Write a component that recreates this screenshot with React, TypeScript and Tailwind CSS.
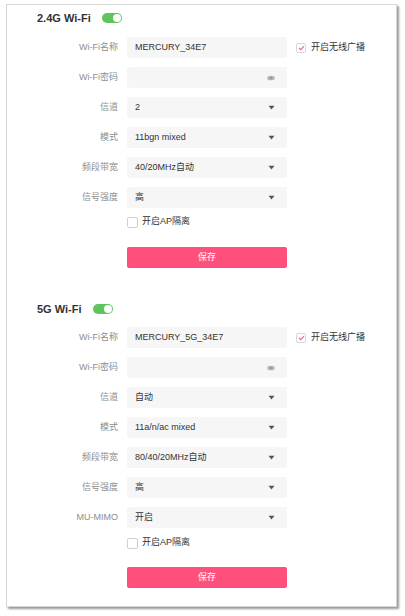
import React from "react";

const FONT = { fontFamily: '"Liberation Sans","Noto Sans CJK SC",sans-serif' };

function Toggle() {
  return (
    <div className="ml-[11px] flex h-[10px] w-[20px] items-center justify-end rounded-full bg-[#5ec45e] pr-[1px]">
      <div className="h-[8px] w-[8px] rounded-full bg-white" />
    </div>
  );
}

function Chevron() {
  return (
    <svg width="7" height="5" viewBox="0 0 7 5" className="shrink-0">
      <path d="M0.5 0.8 L6.5 0.8 L3.5 4.4 Z" fill="#555" />
    </svg>
  );
}

function Eye() {
  return (
    <svg width="8" height="6" viewBox="0 0 8 6" className="shrink-0">
      <ellipse cx="4" cy="3" rx="3.8" ry="2.3" fill="#b5b5b5" />
      <circle cx="4" cy="3" r="1.2" fill="#9a9a9a" />
    </svg>
  );
}

type RowProps = {
  label: string;
  value?: string;
  icon?: "eye" | "chevron";
  extra?: React.ReactNode;
};

function Row({ label, value, icon, extra }: RowProps) {
  return (
    <div className="flex h-[21px] items-center">
      <div className="w-[111px] shrink-0 text-right text-[9px] text-[#8e8e8e]">{label}</div>
      <div className="ml-[9px] flex h-[21px] w-[160px] shrink-0 items-center justify-between rounded-[2px] bg-[#f6f6f6] pl-[8px] pr-[12px] text-[9px] text-[#333]">
        <span>{value}</span>
        {icon === "eye" ? <Eye /> : icon === "chevron" ? <Chevron /> : null}
      </div>
      {extra}
    </div>
  );
}

function Broadcast() {
  return (
    <div className="ml-[9px] flex items-center">
      <div className="flex h-[10px] w-[10px] items-center justify-center rounded-[2px] border border-[#d8d8d8] bg-white">
        <svg width="7" height="6" viewBox="0 0 7 6">
          <path d="M1 3 L2.8 4.7 L6 1.2" stroke="#ff5a80" strokeWidth="1.1" fill="none" />
        </svg>
      </div>
      <span className="ml-[5px] text-[9px] text-[#333]">开启无线广播</span>
    </div>
  );
}

function ApIsolation() {
  return (
    <div className="flex h-[14px] items-center pl-[120px]">
      <div className="h-[11px] w-[11px] rounded-[2px] border border-[#d0d0d0] bg-white" />
      <span className="ml-[4px] text-[9px] text-[#333]">开启AP隔离</span>
    </div>
  );
}

function SaveButton() {
  return (
    <div className="pl-[120px]">
      <button className="flex h-[21px] w-[160px] items-center justify-center rounded-[2px] bg-[#ff4f7b] text-[9px] text-white">
        保存
      </button>
    </div>
  );
}

export default function App() {
  return (
    <div className="h-[616px] w-[405px] bg-white pl-[6px] pt-[4px]" style={FONT}>
      <div className="flex h-[603px] w-[391px] flex-col border border-[#d6d6d6] bg-white shadow-[2px_2px_2px_rgba(0,0,0,0.4)]">
        {/* 2.4G */}
        <div className="mt-[6px] flex h-[14px] items-center pl-[30px]">
          <span className="text-[11px] font-bold text-[#333]">2.4G Wi-Fi</span>
          <Toggle />
        </div>
        <div className="mt-[12px] flex flex-col gap-[9px]">
          <Row label="Wi-Fi名称" value="MERCURY_34E7" extra={<Broadcast />} />
          <Row label="Wi-Fi密码" icon="eye" />
          <Row label="信道" value="2" icon="chevron" />
          <Row label="模式" value="11bgn mixed" icon="chevron" />
          <Row label="频段带宽" value="40/20MHz自动" icon="chevron" />
          <Row label="信号强度" value="高" icon="chevron" />
        </div>
        <div className="mt-[7px]">
          <ApIsolation />
        </div>
        <div className="mt-[18px]">
          <SaveButton />
        </div>

        {/* 5G */}
        <div className="mt-[34px] flex h-[14px] items-center pl-[30px]">
          <span className="text-[11px] font-bold text-[#333]">5G Wi-Fi</span>
          <Toggle />
        </div>
        <div className="mt-[11px] flex flex-col gap-[9px]">
          <Row label="Wi-Fi名称" value="MERCURY_5G_34E7" extra={<Broadcast />} />
          <Row label="Wi-Fi密码" icon="eye" />
          <Row label="信道" value="自动" icon="chevron" />
          <Row label="模式" value="11a/n/ac mixed" icon="chevron" />
          <Row label="频段带宽" value="80/40/20MHz自动" icon="chevron" />
          <Row label="信号强度" value="高" icon="chevron" />
          <Row label="MU-MIMO" value="开启" icon="chevron" />
        </div>
        <div className="mt-[8px]">
          <ApIsolation />
        </div>
        <div className="mt-[17px]">
          <SaveButton />
        </div>
      </div>
    </div>
  );
}
